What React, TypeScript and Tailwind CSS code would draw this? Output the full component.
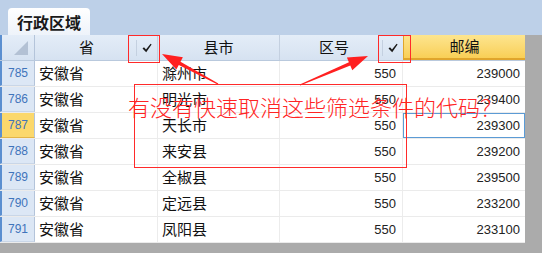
import React from 'react';

interface Row {
  id: number;
  province: string;
  city: string;
  code: string;
  zip: string;
}

const rows: Row[] = [
  { id: 785, province: '安徽省', city: '滁州市', code: '550', zip: '239000' },
  { id: 786, province: '安徽省', city: '明光市', code: '550', zip: '239400' },
  { id: 787, province: '安徽省', city: '天长市', code: '550', zip: '239300' },
  { id: 788, province: '安徽省', city: '来安县', code: '550', zip: '239200' },
  { id: 789, province: '安徽省', city: '全椒县', code: '550', zip: '239500' },
  { id: 790, province: '安徽省', city: '定远县', code: '550', zip: '233200' },
  { id: 791, province: '安徽省', city: '凤阳县', code: '550', zip: '233100' },
];

const cjk = { fontFamily: '"Noto Sans CJK SC", "Noto Sans", sans-serif' };
const num = { fontFamily: '"Liberation Sans", Arial, sans-serif' };

const Check = () => (
  <svg width="10" height="10" viewBox="0 0 10 10">
    <polygon points="0.5,5.5 2,4.3 4,6.6 8.6,0.8 9.6,1.6 4.2,9.2" fill="#1a1a1a" />
  </svg>
);

const FilterButton = () => (
  <div className="flex h-full items-center">
    <div className="h-[16px] w-px bg-[#c4d0e0]" />
    <div className="flex w-[20px] justify-center">
      <Check />
    </div>
  </div>
);

const App = () => {
  return (
    <div className="relative h-[253px] w-[542px] overflow-hidden bg-[#ababab]" style={cjk}>
      {/* tab strip */}
      <div className="flex h-[35px] items-end bg-[#bdd0e8] pl-[8px]">
        <div className="flex h-[27px] w-[82px] items-center justify-center rounded-t-[4px] bg-gradient-to-b from-[#ffffff] to-[#eef3fa] text-[16px] font-bold text-[#1a1a1a]">
          行政区域
        </div>
      </div>

      {/* grid */}
      <div className="w-[525px] bg-white">
        {/* header */}
        <div className="flex h-[26px] border-b border-[#b9c9dd] bg-gradient-to-b from-[#e4edf8] to-[#d6e2f1] text-[15px] text-[#111]">
          <div className="relative w-[35px] border-l-2 border-r border-l-[#5b8fd0] border-r-[#b4c4da]">
            <svg className="absolute right-[6px] bottom-[5px]" width="14" height="14" viewBox="0 0 14 14">
              <polygon points="14,0 14,14 0,14" fill="#b3c1d4" />
            </svg>
          </div>
          <div className="flex w-[123px] items-center border-r border-[#c4d0e0]">
            <div className="flex-1 text-center pl-[2px]">省</div>
            <FilterButton />
          </div>
          <div className="flex w-[122px] items-center justify-center border-r border-[#c4d0e0]">县市</div>
          <div className="flex w-[123px] items-center">
            <div className="flex-1 text-center pl-[6px]">区号</div>
            <FilterButton />
          </div>
          <div className="flex w-[122px] items-center justify-center border-b-2 border-l border-[#e0a52c] bg-gradient-to-b from-[#fde58e] to-[#f9cf55]">
            邮编
          </div>
        </div>

        {/* body */}
        {rows.map((r) => {
          const active = r.id === 787;
          return (
            <div key={r.id} className="flex h-[26px] border-b border-[#ebebeb] text-[15px] text-[#111]">
              <div
                className={
                  active
                    ? 'flex w-[35px] items-center justify-center border-l-2 border-r border-b border-l-[#5b8fd0] border-r-[#b4c4da] border-b-[#e3b548] bg-[#fbd86c] text-[12px] text-[#3f74bb]'
                    : 'flex w-[35px] items-center justify-center border-l-2 border-r border-b border-l-[#5b8fd0] border-r-[#b4c4da] border-b-[#c9d6e7] bg-[#dce7f5] text-[12px] text-[#3f74bb]'
                }
                style={num}
              >
                {r.id}
              </div>
              <div className="flex w-[123px] items-center border-r border-[#ececec] pl-[4px]">{r.province}</div>
              <div className="flex w-[122px] items-center border-r border-[#ececec] pl-[4px]">{r.city}</div>
              <div className="flex w-[123px] items-center justify-end border-r border-[#ececec] pr-[6px] text-[13px] text-[#222]" style={num}>
                {r.code}
              </div>
              <div
                className={
                  active
                    ? 'flex w-[122px] items-center justify-end border border-[#5b9bd5] pr-[4px] text-[13px] text-[#222]'
                    : 'flex w-[122px] items-center justify-end pr-[5px] text-[13px] text-[#222]'
                }
                style={num}
              >
                {r.zip}
              </div>
            </div>
          );
        })}
      </div>

      {/* annotation overlay */}
      <svg className="pointer-events-none absolute left-0 top-0" width="542" height="253" viewBox="0 0 542 253">
        <rect x="128.5" y="35.5" width="31" height="27" fill="none" stroke="#ff2a2a" strokeWidth="1" />
        <rect x="378.5" y="35.5" width="32" height="27" fill="none" stroke="#ff2a2a" strokeWidth="1" />
        <rect x="134.5" y="84.5" width="272" height="83" fill="none" stroke="#ff2a2a" strokeWidth="1" />
        <polygon
          points="162,54 182.9,57.3 180.5,61.8 218.3,83.5 217.7,84.5 178.8,65 176.3,69.6"
          fill="#ff2020"
        />
        <polygon
          points="368,56 346.9,57.4 348.9,62.2 299.8,84.4 300.2,85.6 350.3,65.5 352.3,70.3"
          fill="#ff2020"
        />
      </svg>
      <div
        className="pointer-events-none absolute left-[128px] top-[92px] whitespace-nowrap text-[22px] font-light leading-[28px] text-[#ff2424]"
      >
        有没有快速取消这些筛选条件的代码？
      </div>
    </div>
  );
};

export default App;
